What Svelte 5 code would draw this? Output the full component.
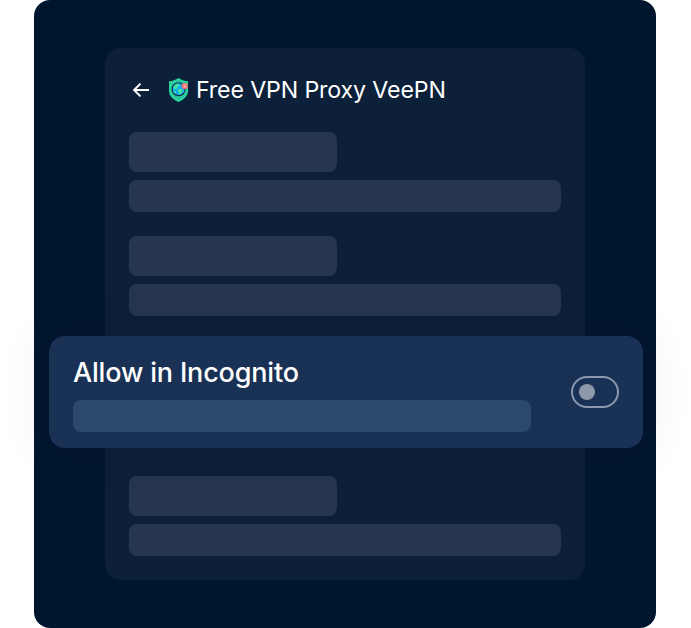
<script>
  let incognito = $state(false);
</script>

{#snippet setting()}
  <div class="setting">
    <div class="bar label"></div>
    <div class="bar detail"></div>
  </div>
{/snippet}

<main class="frame">
  <section class="panel">
    <header>
      <svg class="back" width="18" height="16" viewBox="0 0 18 16" aria-hidden="true">
        <path d="M17 8H2M8.5 1.6 2.1 8l6.4 6.4" />
      </svg>
      <svg class="logo" width="19" height="24" viewBox="0 0 19 24" aria-hidden="true">
        <path d="M9.5 0C6.7 2.1 3.6 3 0 3.2v9.5c0 5.3 4.2 9 9.5 11.2 5.3-2.2 9.5-5.9 9.5-11.2V3.2C15.4 3 12.3 2.1 9.5 0Z" fill="#27d79f" />
        <path d="M9.5 2C7.1 3.6 4.5 4.4 1.8 4.7v8c0 4.2 3.3 7.3 7.7 9.2 4.4-1.9 7.7-5 7.7-9.2v-8C14.5 4.4 11.9 3.6 9.5 2Z" fill="#2cc799" />
        <circle cx="9.6" cy="11.2" r="7" fill="#12304f" />
        <circle cx="9.6" cy="11.2" r="5.9" fill="#12a9fa" />
        <path d="M4.3 9.3C5 7.2 6.6 5.9 9 5.7l1.7.8-.5 1.8-1.9.9-.5 1.8-2 .4ZM8.5 11.4l2.4-.7 3 1.4-.8 2.6-2 1.9-1.4-.5-.1-2.2ZM12.2 7.3l1.8.4 1 2.1-1.6.3ZM4.3 12.2l2.4 1.3.4 2.3-1.9-1.2Z" fill="#43e39b" />
        <circle cx="15.7" cy="8" r="3.1" fill="#ff6261" />
        <path d="M14.7 7.6v-.4a1 1 0 0 1 2 0v.4" fill="none" stroke="#ffd7d4" stroke-width=".6" />
        <rect x="14.2" y="7.6" width="3" height="1.9" rx=".3" fill="#ffb0ad" />
      </svg>
      <h1>Free VPN Proxy VeePN</h1>
    </header>

    {@render setting()}
    {@render setting()}

    <div class="card">
      <div class="copy">
        <h2 id="incognito-label">Allow in Incognito</h2>
        <div class="bar summary"></div>
      </div>
      <button
        class="toggle"
        class:on={incognito}
        role="switch"
        aria-checked={incognito}
        aria-labelledby="incognito-label"
        onclick={() => (incognito = !incognito)}
      ><span></span></button>
    </div>

    {@render setting()}
  </section>
</main>

<style>
  :global(body) {
    margin: 0;
    background: #fff;
    overflow: hidden;
  }
  .frame {
    box-sizing: border-box;
    width: 622px;
    height: 628px;
    margin-left: 34px;
    padding: 48px 71px;
    border-radius: 16px;
    background: #00162f;
    color: #fff;
    font-family: Inter, "Liberation Sans", sans-serif;
  }
  .panel {
    box-sizing: border-box;
    width: 480px;
    height: 532px;
    padding: 24px;
    border-radius: 16px;
    background: #0d203a;
  }
  header {
    display: flex;
    align-items: center;
    height: 36px;
    margin-bottom: 24px;
    padding-left: 3px;
  }
  .back {
    fill: none;
    stroke: #fff;
    stroke-width: 2;
  }
  .logo {
    margin-left: 19px;
  }
  h1,
  h2 {
    margin: 0;
    white-space: nowrap;
  }
  h1 {
    margin-left: 8px;
    font-size: 23.2px;
    line-height: 36px;
    font-weight: 400;
    letter-spacing: -0.14px;
  }
  .setting {
    display: flex;
    flex-direction: column;
    gap: 8px;
    margin-bottom: 24px;
  }
  .bar {
    height: 32px;
    border-radius: 8px;
    background: #25364e;
  }
  .bar.label {
    width: 208px;
    height: 40px;
  }
  .card {
    box-sizing: border-box;
    position: relative;
    display: flex;
    align-items: center;
    justify-content: space-between;
    height: 112px;
    margin: -4px -82px 28px -80px;
    padding: 16px 24px;
    border-radius: 16px;
    background: #1a3156;
    box-shadow: 0 0 50px rgba(30, 30, 30, 0.1);
  }
  .copy {
    width: 458px;
  }
  h2 {
    height: 48px;
    font-size: 27px;
    line-height: 42px;
    font-weight: 500;
    letter-spacing: -0.17px;
  }
  .bar.summary {
    background: #2c486c;
  }
  .toggle {
    box-sizing: border-box;
    display: flex;
    align-items: center;
    width: 48px;
    height: 32px;
    padding: 0 6px;
    border: 2px solid #8d98ab;
    border-radius: 16px;
    background: none;
  }
  .toggle.on {
    justify-content: flex-end;
  }
  .toggle span {
    width: 16px;
    height: 16px;
    border-radius: 50%;
    background: #8d98ab;
  }
</style>
